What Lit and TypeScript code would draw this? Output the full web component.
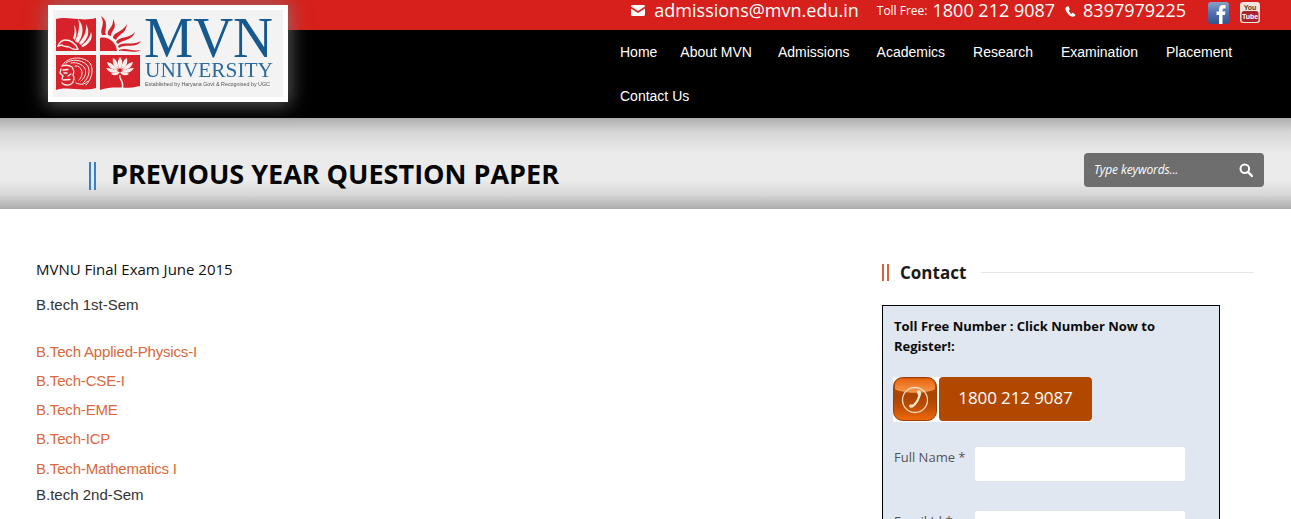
import { LitElement, html, css, svg } from "lit";
import { customElement } from "lit/decorators.js";

const NAV = ["Home", "About MVN", "Admissions", "Academics", "Research", "Examination", "Placement", "Contact Us"];
const LINKS = ["B.Tech Applied-Physics-I", "B.Tech-CSE-I", "B.Tech-EME", "B.Tech-ICP", "B.Tech-Mathematics I"];

const logoArt = svg`
  <svg class="art" width="240" height="97" viewBox="0 0 240 97">
    <rect width="240" height="97" fill="#fff"/>
    <rect x="5" y="5" width="230" height="87" fill="#f3f3f3"/>
    <!-- top-left flag with wing -->
    <path d="M8 14 C20 11 34 17 48 13 V46 H8Z" fill="#d6222a"/>
    <g fill="#f7eeec">
      <path d="M27 36 C31 28 32 20 30 14 C36 20 36 30 30 38Z"/>
      <path d="M31 38 C36 32 39 26 38 19 C42 26 41 33 33 40Z"/>
      <path d="M33 41 C38 37 42 33 43 27 C45 32 43 38 35 42Z"/>
      <path d="M25 33 C27 28 27 24 26 20 C29 24 29 30 27 35Z"/>
    </g>
    <path d="M30 44 C27 38 22 35 17 35 C14 35 11 38 10 41 L14 40 C15 42 19 41 21 42 C24 44 27 45 30 44Z" fill="none" stroke="#f7eeec" stroke-width="1.400"/>
    <!-- sun -->
    <path d="M52 46 V33 C60 31 68 37 69 46Z" fill="#d6222a"/>
    <g fill="#d6222a">
      <path d="M54 30 C51 24 58 20 53 11 C62 18 56 24 58 30Z"/>
      <path d="M60 30 C58 24 66 23 65 14 C70 24 63 25 63 31Z"/>
      <path d="M65 33 C65 27 74 28 79 19 C78 29 70 29 68 35Z"/>
      <path d="M68 37 C71 31 81 34 87 27 C84 36 75 34 70 39Z"/>
      <path d="M70 41 C75 36 84 41 93 36 C88 44 78 38 71 43Z"/>
      <path d="M71 45 C78 42 84 47 93 45 C86 49 78 45 71 46Z"/>
    </g>
    <!-- bottom-left flag with lion -->
    <path d="M8 50 H48 V83 C34 87 20 81 8 85Z" fill="#d6222a"/>
    <g fill="none" stroke="#f7eeec" stroke-linecap="round">
      <g stroke-width="1">
        <path d="M14 61 C18 52 34 50 42 58 C46 64 44 74 38 80"/>
        <path d="M18 58 C23 54 33 54 39 60 C43 65 41 73 35 78"/>
        <path d="M23 58 C27 57 32 58 36 62 C39 66 38 72 33 76"/>
        <path d="M27 61 C31 60 34 64 34 68 C34 71 33 73 31 75"/>
        <path d="M28 78 C33 80 36 80 40 76"/>
      </g>
      <g stroke-width="1.300">
        <path d="M14 61 C17 60 21 60 24 62 C26 65 26 68 25 70 C27 73 26 77 23 79 C20 81 16 80 14 78"/>
        <path d="M13 64 L12 68 L15 71 L14 74"/>
        <path d="M15 65 L20 64.500 M16 68 L19 68 M15 75 L22 74.500 M20 71 L23 69"/>
      </g>
    </g>
    <!-- bottom-right flag with lotus -->
    <path d="M52 50 H92 V81 C78 85 66 80 52 85Z" fill="#d6222a"/>
    <g fill="#f7eeec">
      <path d="M72 52 C75 56 75 60 72 64 C69 60 69 56 72 52Z"/>
      <path d="M65 53 C69 55 70 59 71 64 C66 63 64 58 65 53Z"/>
      <path d="M79 53 C75 55 74 59 73 64 C78 63 80 58 79 53Z"/>
      <path d="M59 57 C64 58 67 61 70 65 C64 65 60 62 59 57Z"/>
      <path d="M85 57 C80 58 77 61 74 65 C80 65 84 62 85 57Z"/>
      <path d="M58 63 C63 63 67 65 71 66 C66 69 61 68 58 63Z"/>
      <path d="M86 63 C81 63 77 65 73 66 C78 69 83 68 86 63Z"/>
      <path d="M63 69 C66 67 69 67 72 67 C70 71 66 71 63 69Z"/>
      <path d="M81 69 C78 67 75 67 72 67 C74 71 78 71 81 69Z"/>
    </g>
    <path d="M72 70 C70 74 77 76 74 84" fill="none" stroke="#f7eeec" stroke-width="1.500"/>
    <text class="mvn" x="96" y="52" textLength="129" lengthAdjust="spacingAndGlyphs">MVN</text>
    <text class="uni" x="97" y="72" textLength="128" lengthAdjust="spacingAndGlyphs">UNIVERSITY</text>
    <text class="est" x="97" y="81" textLength="125" lengthAdjust="spacingAndGlyphs">Established by Haryana Govt &amp; Recognised by UGC</text>
  </svg>`;

@customElement("app-root")
export class AppRoot extends LitElement {
  static styles = css`
    :host { display: block; height: 519px; overflow: hidden; position: relative; background: #fff; font-family: "Open Sans", sans-serif; }
    .logo { position: absolute; left: 48px; top: 5px; width: 240px; height: 97px; box-shadow: 0 0 18px 2px rgba(130,130,130,.75); }
    .art { display: block; filter: blur(.35px); }
    .mvn { font: 58px "Liberation Serif", serif; fill: #15598f; }
    .uni { font: 20px "Liberation Serif", serif; fill: #2a6a9c; }
    .est { font: 5px "Liberation Sans", sans-serif; fill: #555; }

    .top { height: 30px; background: #d7201b; color: #fff; display: flex; justify-content: flex-end; align-items: flex-start; padding-right: 31px; box-sizing: border-box; }
    .contact { display: flex; align-items: center; height: 20px; line-height: 20px; }
    .mail { margin-right: 9px; }
    .email { font-size: 18px; margin-right: 18px; }
    .toll { font-size: 12px; margin-right: 5px; padding-top: 2px; }
    .num { font-size: 18px; }
    .ph { margin: 2px 7px 0 10px; }
    .social { display: flex; gap: 11px; margin-left: 22px; align-self: flex-start; margin-top: 2px; }
    .social svg { display: block; }
    .yt { font: bold 7px "Liberation Sans", sans-serif; }

    .head { height: 88px; background: #000; padding-left: 620px; box-sizing: border-box; }
    nav { display: flex; flex-wrap: wrap; width: 640px; column-gap: 28px; font: 14px/44px "Liberation Sans", Arial, sans-serif; color: #fff; }
    nav a.home { margin-right: -5px; }
    nav a.about { margin-right: -2px; }
    nav a.adm { margin-right: -1px; }

    .title { height: 91px; box-sizing: border-box; padding: 44px 27px 0 89px; display: flex; justify-content: space-between; align-items: flex-start;
      background: linear-gradient(#aeaeae 0, #d6d6d6 14px, #ebebeb 36px, #ebebeb 62px, #d8d8d8 76px, #acacac 91px); }
    h1 { margin: 0; height: 28px; border-left: 7px double #3b80c4; padding-left: 15px; font-size: 27px; line-height: 24px; font-weight: 700; color: #050505; text-transform: uppercase; white-space: nowrap; }
    .search { width: 180px; height: 34px; margin-top: -9px; background: #6e6e6e; border-radius: 4px; display: flex; align-items: center; justify-content: space-between; padding: 0 11px 1px 10px; box-sizing: border-box; color: #fff; font-size: 12px; font-style: italic; letter-spacing: -.12px; }

    main { display: grid; grid-template-columns: 846px 372px; padding: 50px 0 0 36px; }
    .l p { margin: 0; line-height: 20px; }
    .exam { font-size: 15px; color: #111; }
    .sem { font: 15px/20px "Liberation Sans", Arial, sans-serif; color: #333; }
    .s1 { margin-top: 16px !important; }
    .s2 { margin-top: 6px !important; }
    ul { list-style: none; margin: 27px 0 0; padding: 0; display: grid; row-gap: 9px; font: 15px/20px "Liberation Sans", Arial, sans-serif; letter-spacing: -.17px; color: #d9683a; }
    ul li:last-child { margin-top: 1px; }

    aside h2 { margin: 5px 0 0 0; display: flex; align-items: center; font-size: 17px; line-height: 18px; font-weight: 700; color: #1a1a1a; }
    aside h2 .bar { width: 7px; height: 17px; box-sizing: border-box; border-left: 7px double #d9623a; margin: -2px 11px 0 0; }
    aside h2 .rule { flex: 1; height: 1px; background: #e6e6e6; margin: -2px 0 0 15px; }
    .box { width: 338px; box-sizing: border-box; margin-top: 23px; border: 1px solid #000; background: #e1e7f0; padding: 10px 11px 0; height: 300px; }
    .box .lead { font-size: 13px; font-weight: 700; line-height: 20px; color: #0a0a0a; }
    .call { display: flex; width: 199px; height: 45px; margin: 21px 0 0 -1px; background: #fff; }
    .call .ico { width: 44px; height: 44px; display: block; }
    .call .n { width: 153px; height: 44px; margin: 0 0 0 2px; padding-bottom: 4px; box-sizing: border-box; border-radius: 4px; background: #b04800; color: #fff; font-size: 17px; letter-spacing: -.1px; display: flex; align-items: center; justify-content: center; }
    .row { display: grid; grid-template-columns: 81px 210px; margin-top: 25px; font-size: 13px; color: #555; }
    .row + .row { margin-top: 30px; }
    .row label { line-height: 20px; }
    .row i { display: block; height: 34px; background: #fff; border-radius: 3px; }
  `;

  render() {
    return html`
      <div class="logo">${logoArt}</div>
      <div class="top">
        <div class="contact">
          <svg class="mail" width="14" height="11" viewBox="0 0 14 11"><path fill="#fff" d="M0 1.5C0 .7.6 0 1.4 0h11.2c.8 0 1.4.7 1.4 1.5L7 6 0 1.5Zm0 2L7 8l7-4.5v6c0 .8-.6 1.5-1.4 1.5H1.400C.6 11 0 10.300 0 9.500v-6Z"/></svg>
          <span class="email">admissions@mvn.edu.in</span>
          <span class="toll">Toll Free:</span>
          <span class="num">1800 212 9087</span>
          <svg class="ph" width="11" height="11" viewBox="0 0 11 11"><path fill="#fff" d="M2.700.3 1 1.300C0 2 .3 3.800 1.500 5.700c1.300 2.200 3.500 4.600 5.700 5 1 .2 2.200-.3 3-1.200.3-.4.300-.8-.1-1.100L8.200 7c-.4-.2-.8-.2-1.100.1l-.7.8C5.500 7.300 4 5.500 3.600 4.500l.8-.6c.3-.3.400-.7.200-1.100L3.600.6C3.400.2 3 .100 2.700.300Z"/></svg>
          <span class="num">8397979225</span>
          <div class="social">
            <svg width="21" height="22" viewBox="0 0 21 22">
              <defs><linearGradient id="fb" x1="0" y1="0" x2="0" y2="1"><stop offset="0" stop-color="#8aa0c8"/><stop offset=".5" stop-color="#4f6fae"/><stop offset="1" stop-color="#34528f"/></linearGradient></defs>
              <rect width="21" height="22" rx="3" fill="url(#fb)"/>
              <path fill="#fff" d="M11 22V13H8.500V9.500H11V7.300C11 4.500 12.700 3 15.200 3h2.300v3.400h-1.600c-1.100 0-1.400.6-1.400 1.400v1.700h3l-.5 3.500h-2.500v9Z"/>
            </svg>
            <svg width="20" height="21" viewBox="0 0 20 21">
              <rect width="20" height="21" rx="3" fill="#f2e6dc"/>
              <rect x="1.500" y="9" width="17" height="11" rx="2.500" fill="#a8242a"/>
              <text class="yt" x="10" y="7.500" text-anchor="middle" fill="#5a3a30">You</text>
              <text class="yt" x="10" y="17" text-anchor="middle" fill="#fff">Tube</text>
            </svg>
          </div>
        </div>
      </div>
      <div class="head">
        <nav>${NAV.map((n, i) => html`<a class=${i === 0 ? "home" : i === 1 ? "about" : i === 2 ? "adm" : ""}>${n}</a>`)}</nav>
      </div>
      <div class="title">
        <h1>Previous Year Question Paper</h1>
        <div class="search">
          <span>Type keywords...</span>
          <svg width="14" height="14" viewBox="0 0 14 14"><circle cx="5.800" cy="5.800" r="4.300" fill="none" stroke="#fff" stroke-width="2"/><path d="M9 9l4 4" stroke="#fff" stroke-width="2.400" stroke-linecap="round"/></svg>
        </div>
      </div>
      <main>
        <div class="l">
          <p class="exam">MVNU Final Exam June 2015</p>
          <p class="sem s1">B.tech 1st-Sem</p>
          <ul>${LINKS.map((l) => html`<li>${l}</li>`)}</ul>
          <p class="sem s2">B.tech 2nd-Sem</p>
        </div>
        <aside>
          <h2><span class="bar"></span>Contact<span class="rule"></span></h2>
          <div class="box">
            <div class="lead">Toll Free Number : Click Number Now to Register!:</div>
            <div class="call">
              <svg class="ico" viewBox="0 0 44 44">
                <defs>
                  <linearGradient id="ob" x1="0" y1="0" x2="0" y2="1"><stop offset="0" stop-color="#b84c04"/><stop offset=".45" stop-color="#a84400"/><stop offset=".7" stop-color="#c25004"/><stop offset="1" stop-color="#ef6a0c"/></linearGradient>
                  <linearGradient id="gl" x1="0" y1="0" x2="0" y2="1"><stop offset="0" stop-color="#e8640e"/><stop offset="1" stop-color="#f79a4e"/></linearGradient>
                </defs>
                <rect x=".5" y=".5" width="43" height="43" rx="9" fill="url(#ob)" stroke="#9a4006"/>
                <path d="M2 9C2 4 5 1.500 10 1.500h24C39 1.500 42 4 42 9v3C34 17 10 17 2 12Z" fill="url(#gl)"/>
                <circle cx="22" cy="23" r="12.500" fill="none" stroke="#f3dcc0" stroke-width="1.300"/>
                <path d="M26 13c-1 .5-2.500 1.500-2 3 .5 1.200 1.300 1.400 1 3-.6 3-2.500 6-4.500 8-1 1-2.300.3-3.500.6-1 .3-1 1.600-.4 2.700 1 1 3 .5 4.500-.8 3.500-3.200 6-7.500 7-12.500.3-1.500-.6-3.500-2.100-4Z" fill="#f3e6cf"/>
              </svg>
              <div class="n">1800 212 9087</div>
            </div>
            <div class="row"><label>Full Name *</label><i></i></div>
            <div class="row"><label>Email Id *</label><i></i></div>
          </div>
        </aside>
      </main>`;
  }
}
